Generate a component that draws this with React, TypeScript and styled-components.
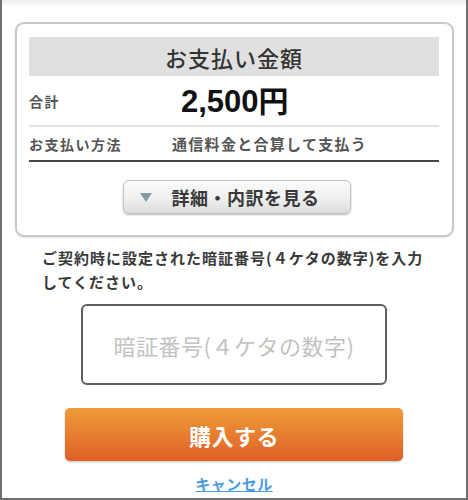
import React from "react";
import styled, { createGlobalStyle } from "styled-components";

const Global = createGlobalStyle`
  html, body { margin: 0; padding: 0; background: #fff; }
  body { font-family: "Liberation Sans", "Noto Sans CJK JP", sans-serif; }
`;

const JP = `"Noto Sans CJK JP", "Liberation Sans", sans-serif`;

const Frame = styled.div`
  box-sizing: border-box;
  width: 468px;
  height: 500px;
  border-left: 2px solid #6e6e6e;
  border-right: 2px solid #6e6e6e;
  border-bottom: 2px solid #6e6e6e;
  background: linear-gradient(#ececec 0px, #f7f7f7 4px, #fff 8px);
  padding: 22px 12px 0 13px;
  display: flex;
  flex-direction: column;
  align-items: stretch;
  font-family: ${JP};
`;

const Card = styled.section`
  box-sizing: border-box;
  height: 215px;
  border: 2px solid #c9c9c9;
  border-radius: 9px;
  box-shadow: 0 1px 2px rgba(0, 0, 0, 0.12);
  padding: 13px 13px 0 12px;
  display: flex;
  flex-direction: column;
`;

const Header = styled.h2`
  margin: 0;
  height: 39px;
  background: #e0e0e0;
  display: flex;
  align-items: center;
  justify-content: center;
  font-size: 22px;
  font-weight: 500;
  color: #333;
  letter-spacing: 1px;
`;

const Row = styled.div<{ $h: number; $line: string; $lw: number }>`
  box-sizing: border-box;
  height: ${(p) => p.$h}px;
  display: grid;
  grid-template-columns: 143px 1fr;
  align-items: center;
  border-bottom: ${(p) => p.$lw}px solid ${(p) => p.$line};
`;

const Label = styled.span`
  font-size: 14px;
  font-weight: 700;
  color: #555;
  letter-spacing: 1.5px;
`;

const Value = styled.span`
  font-size: 15px;
  font-weight: 700;
  color: #555;
  letter-spacing: 1.3px;
`;

const Amount = styled.span`
  padding-left: 9px;
  font-family: "Liberation Sans", ${JP};
  font-size: 31px;
  font-weight: 700;
  color: #111;
  line-height: 1;
`;

const Yen = styled.span`
  font-family: ${JP};
  font-size: 30px;
`;

const DetailWrap = styled.div`
  display: flex;
  justify-content: center;
  padding-top: 18px;
  padding-left: 5px;
`;

const DetailButton = styled.button`
  box-sizing: border-box;
  width: 228px;
  height: 34px;
  border: 1px solid #c4c4c4;
  border-radius: 6px;
  background: linear-gradient(#fbfbfb 0%, #f1f1f1 50%, #dcdede 100%);
  box-shadow: 0 1px 2px rgba(0, 0, 0, 0.3);
  display: flex;
  align-items: center;
  padding: 0 0 0 16px;
  gap: 20px;
  font-family: ${JP};
  font-size: 18px;
  font-weight: 700;
  color: #3a3a3a;
  letter-spacing: 0.5px;
`;

const Tri = styled.svg`
  width: 12px;
  height: 9px;
  flex: none;
`;

const Instruction = styled.p`
  margin: 9px 0 0 27px;
  font-size: 15px;
  font-weight: 700;
  line-height: 24px;
  color: #3a3a3a;
  letter-spacing: 1px;
`;

const PinBox = styled.div`
  box-sizing: border-box;
  align-self: center;
  margin: 10px 0 0 -1px;
  width: 306px;
  height: 81px;
  border: 2.5px solid #5e5e5e;
  border-radius: 6px;
  display: flex;
  align-items: center;
  justify-content: center;
  font-size: 22px;
  color: #c2c2c2;
  letter-spacing: 0.5px;
`;

const BuyButton = styled.button`
  box-sizing: border-box;
  align-self: center;
  margin: 23px 0 0 -1px;
  width: 338px;
  height: 53px;
  border: none;
  border-radius: 5px;
  background: linear-gradient(#ee9b39 0%, #e77e30 50%, #de5f28 100%);
  box-shadow: 0 1px 2px rgba(0, 0, 0, 0.25);
  color: #fff;
  font-family: ${JP};
  font-size: 22px;
  font-weight: 700;
  letter-spacing: 0.5px;
`;

const Cancel = styled.a`
  align-self: center;
  margin: 12px 0 0 -1px;
  font-size: 15px;
  font-weight: 700;
  color: #4c9be0;
  text-decoration: underline;
  letter-spacing: 0.5px;
`;

export default function App() {
  return (
    <>
      <Global />
      <Frame>
        <Card>
          <Header>お支払い金額</Header>
          <Row $h={51} $line="#e3e3e3" $lw={2}>
            <Label>合計</Label>
            <Amount>
              2,500<Yen>円</Yen>
            </Amount>
          </Row>
          <Row $h={35} $line="#454545" $lw={2}>
            <Label>お支払い方法</Label>
            <Value>通信料金と合算して支払う</Value>
          </Row>
          <DetailWrap>
            <DetailButton>
              <Tri viewBox="0 0 12 9">
                <polygon points="0,0 12,0 6,9" fill="#7f9ea0" />
              </Tri>
              詳細・内訳を見る
            </DetailButton>
          </DetailWrap>
        </Card>
        <Instruction>
          ご契約時に設定された暗証番号(４ケタの数字)を入力
          <br />
          してください。
        </Instruction>
        <PinBox>暗証番号(４ケタの数字)</PinBox>
        <BuyButton>購入する</BuyButton>
        <Cancel href="#">キャンセル</Cancel>
      </Frame>
    </>
  );
}
